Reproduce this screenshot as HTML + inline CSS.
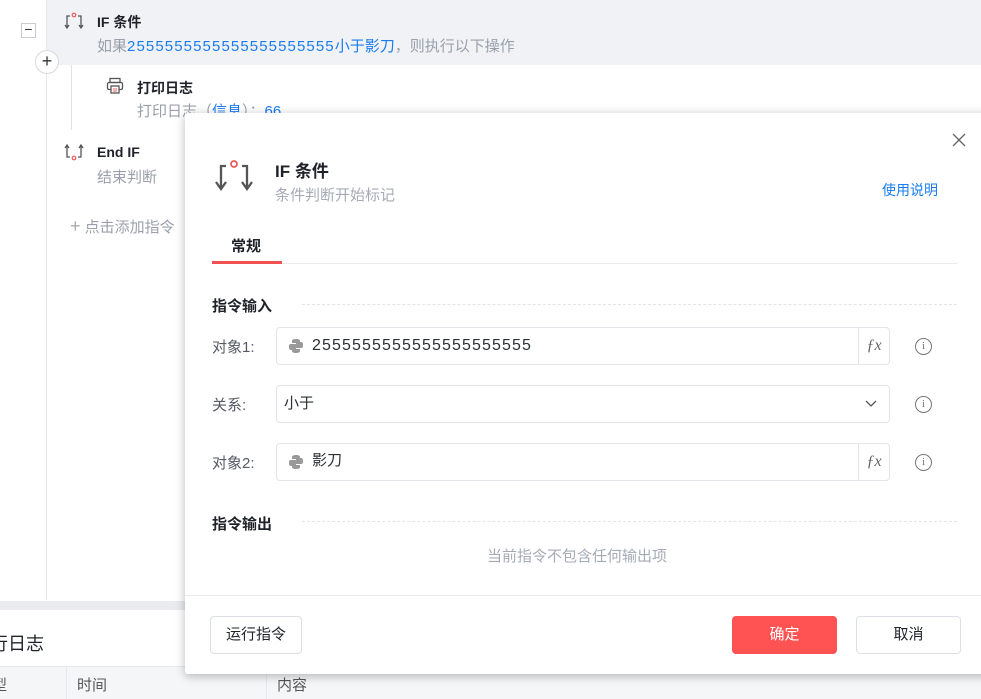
<!DOCTYPE html>
<html><head><meta charset="utf-8"><style>
*{margin:0;padding:0;box-sizing:border-box}
body{width:981px;height:699px;overflow:hidden;background:#fff;font-family:"Liberation Sans","Noto Sans CJK SC",sans-serif;position:relative;color:#1f2329}
.a{position:absolute}
.t{font-size:14px;font-weight:bold;color:#1f2329}
.s{font-size:15px;color:#9aa0ab}
.d{letter-spacing:1.1px}
.blue{color:#1a7cf0}
.inp{position:absolute;left:276px;width:614px;height:38px;border:1px solid #e2e4ea;border-radius:4px;font-size:15px;color:#2b2f36;line-height:20px}
.lbl{position:absolute;left:212px;font-size:15px;color:#555a64}
.fx{position:absolute;right:0;top:0;width:31px;height:36px;border-left:1px solid #e2e4ea;font-style:italic;font-family:"Liberation Serif",serif;color:#666;font-size:16px;text-align:center;line-height:36px}
.info{position:absolute;left:915px;width:17px;height:17px;border:1.5px solid #777;border-radius:50%;font-size:11px;color:#777;text-align:center;line-height:14px;font-family:"Liberation Serif",serif}
.py{position:absolute;left:11px;top:10px}
</style></head><body>
<div class="a" style="left:46px;top:0;width:935px;height:65px;background:#f0f2f5"></div>
<div class="a" style="left:46px;top:0;width:1px;height:600px;background:#e6e8ec"></div>
<div class="a" style="left:21px;top:23px;width:15px;height:15px;border:1px solid #c8cbd1;background:#fff;font-size:14px;line-height:11px;text-align:center;color:#333">−</div>
<div class="a" style="left:35px;top:50px;width:24px;height:24px;border:1px solid #d6d8dd;border-radius:50%;background:#fff;font-size:18px;line-height:21px;text-align:center;color:#333">+</div>
<div class="a" style="left:71px;top:65px;width:1px;height:65px;background:#e0e2e6"></div>
<svg class="a" style="left:64px;top:12px" width="20" height="18" viewBox="0 0 20 18"><path d="M3 16V4h3M14 4h3v12M1 13l2 3 2-3M15 13l2 3 2-3" fill="none" stroke="#555" stroke-width="1.3"/><circle cx="10" cy="3" r="1.8" fill="none" stroke="#f05a5a" stroke-width="1.2"/></svg>
<div class="a t" style="left:97px;top:12px">IF 条件</div>
<div class="a s" style="left:97px;top:35px">如果<span class="blue"><span class="d">2555555555555555555555</span>小于影刀</span>，则执行以下操作</div>
<svg class="a" style="left:106px;top:77px" width="18" height="18" viewBox="0 0 18 18"><rect x="4" y="1.5" width="10" height="4" fill="none" stroke="#555" stroke-width="1.3"/><rect x="1.5" y="5.5" width="15" height="7" rx="1.5" fill="none" stroke="#555" stroke-width="1.3"/><rect x="5" y="9" width="8" height="7" fill="#fff" stroke="#555" stroke-width="1.3"/><path d="M7 12h4M7 14h4" stroke="#f05a5a"/></svg>
<div class="a t" style="left:137px;top:78px">打印日志</div>
<div class="a s" style="left:137px;top:100px">打印日志（<span class="blue">信息</span>）：<span class="blue">66</span></div>
<svg class="a" style="left:64px;top:143px" width="20" height="18" viewBox="0 0 20 18"><path d="M3 2v12h3M14 14h3V2M1 5l2-3 2 3M15 5l2-3 2 3" fill="none" stroke="#555" stroke-width="1.3"/><circle cx="10" cy="15" r="1.8" fill="none" stroke="#f05a5a" stroke-width="1.2"/></svg>
<div class="a t" style="left:97px;top:144px">End IF</div>
<div class="a s" style="left:97px;top:166px">结束判断</div>
<div class="a s" style="left:70px;top:216px"><span style="font-size:18px;color:#aaa">+</span> 点击添加指令</div>
<div class="a" style="left:0;top:601px;width:200px;height:9px;background:#e9ebef"></div>
<div class="a" style="left:-10px;top:630px;font-size:18px;color:#1f2329">行日志</div>
<div class="a" style="left:0;top:666px;width:981px;height:33px;background:#f5f6f8;border-top:1px solid #e6e8ec"></div>
<div class="a" style="left:66px;top:666px;width:1px;height:33px;background:#e6e8ec"></div>
<div class="a" style="left:266px;top:666px;width:1px;height:33px;background:#e6e8ec"></div>
<div class="a" style="left:-8px;top:674px;font-size:15px;color:#555">型</div>
<div class="a" style="left:77px;top:674px;font-size:15px;color:#555">时间</div>
<div class="a" style="left:277px;top:674px;font-size:15px;color:#555">内容</div>

<div class="a" style="left:185px;top:113px;width:810px;height:561px;background:#fff;box-shadow:0 2px 10px rgba(0,0,0,.28);border-radius:3px"></div>
<svg class="a" style="left:952px;top:133px" width="14" height="14" viewBox="0 0 14 14"><path d="M1 1l12 12M13 1L1 13" stroke="#666" stroke-width="1.3"/></svg>
<svg class="a" style="left:215px;top:158px" width="38" height="34" viewBox="0 0 38 34"><path d="M6 30V8h5M27 8h5v22M1 24l5 7 5-7M27 24l5 7 5-7" fill="none" stroke="#555" stroke-width="2.3"/><circle cx="19" cy="6" r="3" fill="#fff" stroke="#f05a5a" stroke-width="1.8"/></svg>
<div class="a" style="left:275px;top:157px;font-size:17px;font-weight:bold">IF 条件</div>
<div class="a" style="left:275px;top:184px;font-size:15px;color:#a5abb6">条件判断开始标记</div>
<div class="a blue" style="left:882px;top:180px;font-size:14px">使用说明</div>
<div class="a" style="left:231px;top:235px;font-size:15px;font-weight:bold">常规</div>
<div class="a" style="left:212px;top:263px;width:745px;height:1px;background:#e8eaee"></div>
<div class="a" style="left:212px;top:261px;width:70px;height:3px;background:#f05050"></div>
<div class="a" style="left:212px;top:295px;font-size:15px;font-weight:bold">指令输入</div>
<div class="a" style="left:302px;top:304px;width:655px;border-top:1px dashed #e2e4ea"></div>
<div class="lbl" style="top:336px">对象1:</div>
<div class="inp" style="top:327px"><svg class="py" width="16" height="16" viewBox="0 0 16 16"><path d="M8 1C4 1 4 2.5 4 3v2h4v1H2.5C1 6 1 8 1 9s0 3 2 3h1V10c0-1 1-2 2-2h4c1 0 2-1 2-2V3c0-1-1-2-4-2zM8 15c4 0 4-1.5 4-2v-2H8v-1h5.5c1.5 0 1.5-2 1.5-3s0-3-2-3h-1v2c0 1-1 2-2 2H6c-1 0-2 1-2 2v3c0 1 1 2 4 2z" fill="#999"/></svg><span class="a d" style="left:35px;top:8px;font-size:16px">2555555555555555555555</span><div class="fx">ƒx</div></div>
<div class="info" style="top:338px">i</div>
<div class="lbl" style="top:394px">关系:</div>
<div class="inp" style="top:385px"><span class="a" style="left:7px;top:8px">小于</span><svg class="a" style="right:12px;top:14px" width="12" height="8" viewBox="0 0 12 8"><path d="M1 1l5 5 5-5" fill="none" stroke="#555" stroke-width="1.3"/></svg></div>
<div class="info" style="top:396px">i</div>
<div class="lbl" style="top:452px">对象2:</div>
<div class="inp" style="top:443px"><svg class="py" width="16" height="16" viewBox="0 0 16 16"><path d="M8 1C4 1 4 2.5 4 3v2h4v1H2.5C1 6 1 8 1 9s0 3 2 3h1V10c0-1 1-2 2-2h4c1 0 2-1 2-2V3c0-1-1-2-4-2zM8 15c4 0 4-1.5 4-2v-2H8v-1h5.5c1.5 0 1.5-2 1.5-3s0-3-2-3h-1v2c0 1-1 2-2 2H6c-1 0-2 1-2 2v3c0 1 1 2 4 2z" fill="#999"/></svg><span class="a" style="left:35px;top:7px">影刀</span><div class="fx">ƒx</div></div>
<div class="info" style="top:454px">i</div>
<div class="a" style="left:212px;top:513px;font-size:15px;font-weight:bold">指令输出</div>
<div class="a" style="left:302px;top:521px;width:655px;border-top:1px dashed #e2e4ea"></div>
<div class="a" style="left:487px;top:545px;font-size:15px;color:#a5abb6">当前指令不包含任何输出项</div>
<div class="a" style="left:185px;top:595px;width:796px;height:1px;background:#e8eaee"></div>
<div class="a" style="left:210px;top:616px;width:92px;height:38px;border:1px solid #dcdfe5;border-radius:4px;font-size:15px;text-align:center;line-height:36px">运行指令</div>
<div class="a" style="left:732px;top:616px;width:105px;height:38px;background:#ff5252;border-radius:4px;font-size:15px;color:#fff;text-align:center;line-height:38px">确定</div>
<div class="a" style="left:856px;top:616px;width:105px;height:38px;border:1px solid #dcdfe5;border-radius:4px;font-size:15px;text-align:center;line-height:36px">取消</div>
</body></html>
